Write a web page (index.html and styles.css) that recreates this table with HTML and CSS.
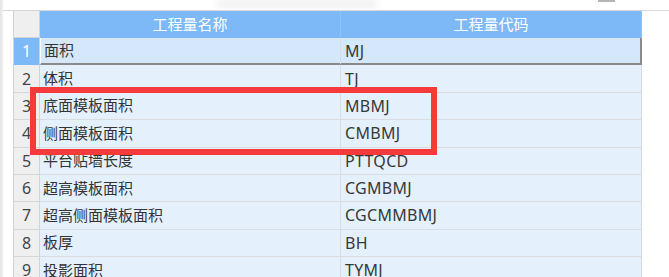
FILE: index.html
```html
<!DOCTYPE html>
<html lang="zh-CN">
<head>
<meta charset="utf-8">
<title>工程量</title>
<link rel="stylesheet" href="styles.css">
</head>
<body>
<div class="page">
  <div class="edge"></div>
  <div class="main">
    <div class="topbar">
      <div class="smudge"></div>
      <div class="tab"></div>
    </div>
    <div class="grid-wrap">
      <div class="grid">
        <div class="corner"></div>
        <div class="head">工程量名称</div>
        <div class="head">工程量代码</div>

        <div class="num sel">1</div>
        <div class="cell selrow">面积</div>
        <div class="cell code selrow last">MJ</div>

        <div class="num">2</div>
        <div class="cell">体积</div>
        <div class="cell code">TJ</div>

        <div class="num">3</div>
        <div class="cell">底面模板面积</div>
        <div class="cell code">MBMJ</div>

        <div class="num">4</div>
        <div class="cell">侧面模板面积</div>
        <div class="cell code">CMBMJ</div>

        <div class="num">5</div>
        <div class="cell">平台贴墙长度</div>
        <div class="cell code">PTTQCD</div>

        <div class="num">6</div>
        <div class="cell">超高模板面积</div>
        <div class="cell code">CGMBMJ</div>

        <div class="num">7</div>
        <div class="cell">超高侧面模板面积</div>
        <div class="cell code">CGCMMBMJ</div>

        <div class="num">8</div>
        <div class="cell">板厚</div>
        <div class="cell code">BH</div>

        <div class="num">9</div>
        <div class="cell">投影面积</div>
        <div class="cell code">TYMJ</div>
      </div>
      <div class="highlight"></div>
    </div>
  </div>
</div>
</body>
</html>
```

FILE: styles.css
```css
html, body {
  margin: 0;
  padding: 0;
  background: #ffffff;
  overflow: hidden;
}

.page {
  display: flex;
  width: 669px;
  height: 277px;
  font-family: "Noto Sans", "Noto Sans CJK SC", sans-serif;
  font-size: 15px;
  color: #333333;
}

.edge {
  width: 3px;
  flex: none;
  background: linear-gradient(to right, #e4e4e4, #f2f2f2);
}

.main {
  flex: 1;
  display: flex;
  flex-direction: column;
}

.topbar {
  height: 10px;
  flex: none;
  border-bottom: 1px solid #d6d6d6;
  display: flex;
  align-items: flex-start;
}

.smudge {
  width: 160px;
  height: 8px;
  margin-left: 214px;
  background: #f1f1f1;
  filter: blur(3px);
}

.tab {
  width: 17px;
  height: 2px;
  margin-left: 221px;
  background: #b5b5b5;
}

.grid-wrap {
  position: relative;
  margin-left: 10px;
}

.grid {
  display: grid;
  grid-template-columns: 27px 301px 301px;
  grid-template-rows: 27px;
  grid-auto-rows: 27.375px;
  width: 629px;
}

.corner {
  background: #efefef;
  border-left: 1px solid #d3d3d3;
  border-right: 1px solid #d3d3d3;
  border-bottom: 1px solid #d3d3d3;
}

.head {
  background: #7cb9f6;
  color: #ffffff;
  display: flex;
  align-items: center;
  justify-content: center;
  border-right: 1px solid #8fc3f6;
  line-height: 1;
}

.num {
  background: #efefef;
  color: #444444;
  border-left: 1px solid #d3d3d3;
  border-right: 1px solid #d3d3d3;
  border-bottom: 1px solid #d6d6d6;
  display: flex;
  align-items: center;
  justify-content: center;
  line-height: 1;
  font-size: 16px;
}

.num.sel {
  background: #7cb9f6;
  color: #ffffff;
  border-bottom-color: #7cb9f6;
}

.cell {
  background: #e4f1fd;
  border-right: 1px solid #d9dde2;
  border-bottom: 1px solid #d9dde2;
  display: flex;
  align-items: center;
  padding-left: 3px;
  line-height: 1;
  white-space: nowrap;
}

.cell.code {
  padding-left: 4px;
  font-size: 16px;
  letter-spacing: 0.3px;
  color: #383838;
}

.cell.selrow {
  background: #d4e7fb;
  border-bottom: 2px solid #8a8a8a;
  border-left: 1px solid #ffffff;
}

.cell.selrow.last {
  border-left: none;
  border-right: 2px solid #8a8a8a;
}

.highlight {
  position: absolute;
  left: 17px;
  top: 76px;
  width: 395px;
  height: 56px;
  border: 6px solid #f53a3b;
}
```
